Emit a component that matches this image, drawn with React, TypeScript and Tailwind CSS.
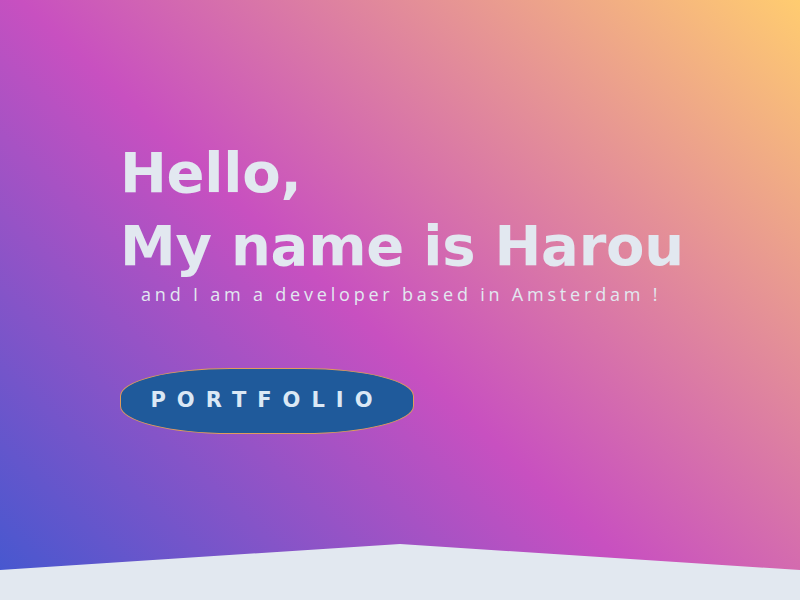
export default function App() {
  return (
    <div className="min-h-screen bg-[#e2e8f0]">
      <section className="h-[600px] bg-[linear-gradient(43deg,#4158D0_0%,#C850C0_46%,#FFCC70_100%)] [clip-path:polygon(0_0,100%_0,100%_570px,50%_544px,0_570px)]">
        <div className="pl-[120px] pt-[136px] text-[#e2e8f0]">
          <h1 className="font-['DejaVu_Sans',sans-serif] text-[56px] font-bold leading-[73px] tracking-[-0.25px]">
            Hello,
            <br />
            My name is Harou
          </h1>
          <p className="ml-[21px] mt-[-1px] font-['Open_Sans',sans-serif] text-[18px] tracking-[3.8px]">
            and I am a developer based in Amsterdam !
          </p>
          <button className="mt-[60px] flex h-[66px] w-[294px] items-center justify-center rounded-[110px_/_28px] border border-[#e09c5c] bg-[#1f5a9b] font-['DejaVu_Sans',sans-serif] text-[21px] font-bold tracking-[11px] text-[#dbe8f5]">
            PORTFOLIO
          </button>
        </div>
      </section>
    </div>
  );
}
